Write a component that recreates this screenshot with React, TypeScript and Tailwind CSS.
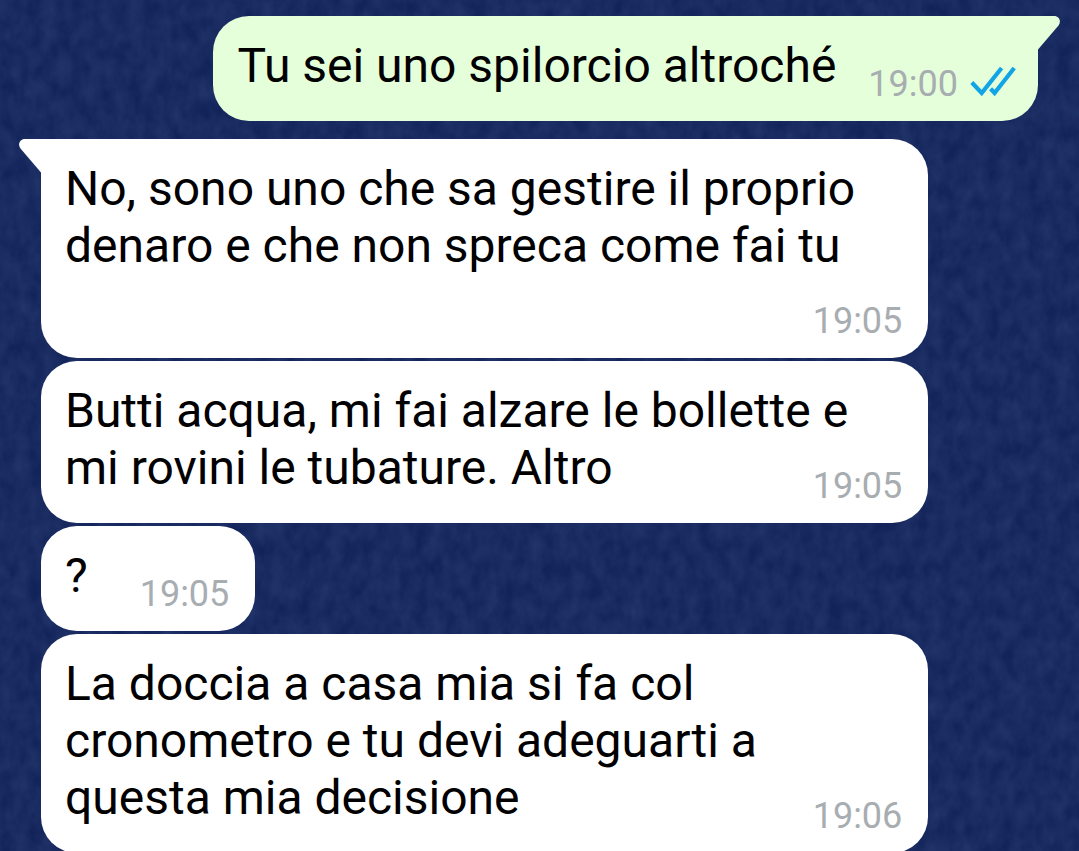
import { clsx } from "clsx";

type Message = {
  id: number;
  text: string;
  time: string;
  outgoing?: boolean;
  tail?: boolean;
};

const messages: Message[] = [
  { id: 1, text: "Tu sei uno spilorcio altroché", time: "19:00", outgoing: true, tail: true },
  { id: 2, text: "No, sono uno che sa gestire il proprio denaro e che non spreca come fai tu", time: "19:05", tail: true },
  { id: 3, text: "Butti acqua, mi fai alzare le bollette e mi rovini le tubature. Altro", time: "19:05" },
  { id: 4, text: "?", time: "19:05" },
  { id: 5, text: "La doccia a casa mia si fa col cronometro e tu devi adeguarti a questa mia decisione", time: "19:06" },
];

function Tail({ outgoing }: { outgoing?: boolean }) {
  return (
    <svg
      viewBox="0 0 22 34"
      aria-hidden="true"
      className={clsx(
        "absolute top-0 w-[22px] h-[34px]",
        outgoing ? "left-full fill-[#e4ffda]" : "right-full -scale-x-100 fill-white"
      )}
    >
      <path d="M-1 0H16C21.5 0 23.5 5.500 20.500 9.500L0 33.500H-1Z" />
    </svg>
  );
}

function ReadTicks() {
  return (
    <svg
      viewBox="0 -3 46 33"
      role="img"
      aria-label="Letto"
      className="w-[46px] h-[33px]"
      fill="none"
      stroke="#12a5e6"
      strokeWidth="4.2"
    >
      <path d="M1.800 16.500 11.700 27 31.600 2" />
      <path d="M20.600 22.700 24.600 27 44.200 2" />
    </svg>
  );
}

/* Woven grain of the chat wallpaper */
function Wallpaper() {
  return (
    <svg aria-hidden="true" className="absolute inset-0 w-full h-full opacity-15">
      <filter id="grain">
        <feTurbulence type="fractalNoise" baseFrequency="0.07 0.05" numOctaves="3" seed="4" />
        <feColorMatrix values="0 0 0 0 0.25  0 0 0 0 0.4  0 0 0 0 0.6  1.2 0 0 0 -0.2" />
      </filter>
      <rect width="100%" height="100%" filter="url(#grain)" />
    </svg>
  );
}

function Bubble({ message }: { message: Message }) {
  const { text, time, outgoing, tail } = message;

  return (
    <li
      className={clsx(
        "relative max-w-[89%] rounded-[36px] pl-6 pt-[21px] pb-4",
        outgoing ? "self-end mb-[15px] bg-[#e4ffda] pr-[22px]" : "self-start bg-white pr-[26px]",
        tail && (outgoing ? "rounded-tr-none" : "rounded-tl-none")
      )}
    >
      {tail && <Tail outgoing={outgoing} />}
      {/* The time floats beside the last line, or drops below it when there is no room */}
      <div className="flow-root text-[48px] leading-[57px] text-black">
        <span>{text}</span>
        <span
          className={clsx(
            "float-right flex items-start gap-3 pt-[26px] text-[36px] leading-[42px] text-[#a7adb0]",
            outgoing ? "ml-8" : "ml-[52px]"
          )}
        >
          <time>{time}</time>
          {outgoing && <ReadTicks />}
        </span>
      </div>
    </li>
  );
}

export default function App() {
  return (
    <main className="relative h-screen overflow-hidden bg-[#12235a] font-[Roboto,sans-serif]">
      <Wallpaper />
      <ul className="relative flex flex-col gap-[3px] px-[41px] pt-4">
        {messages.map((message) => (
          <Bubble key={message.id} message={message} />
        ))}
      </ul>
    </main>
  );
}
